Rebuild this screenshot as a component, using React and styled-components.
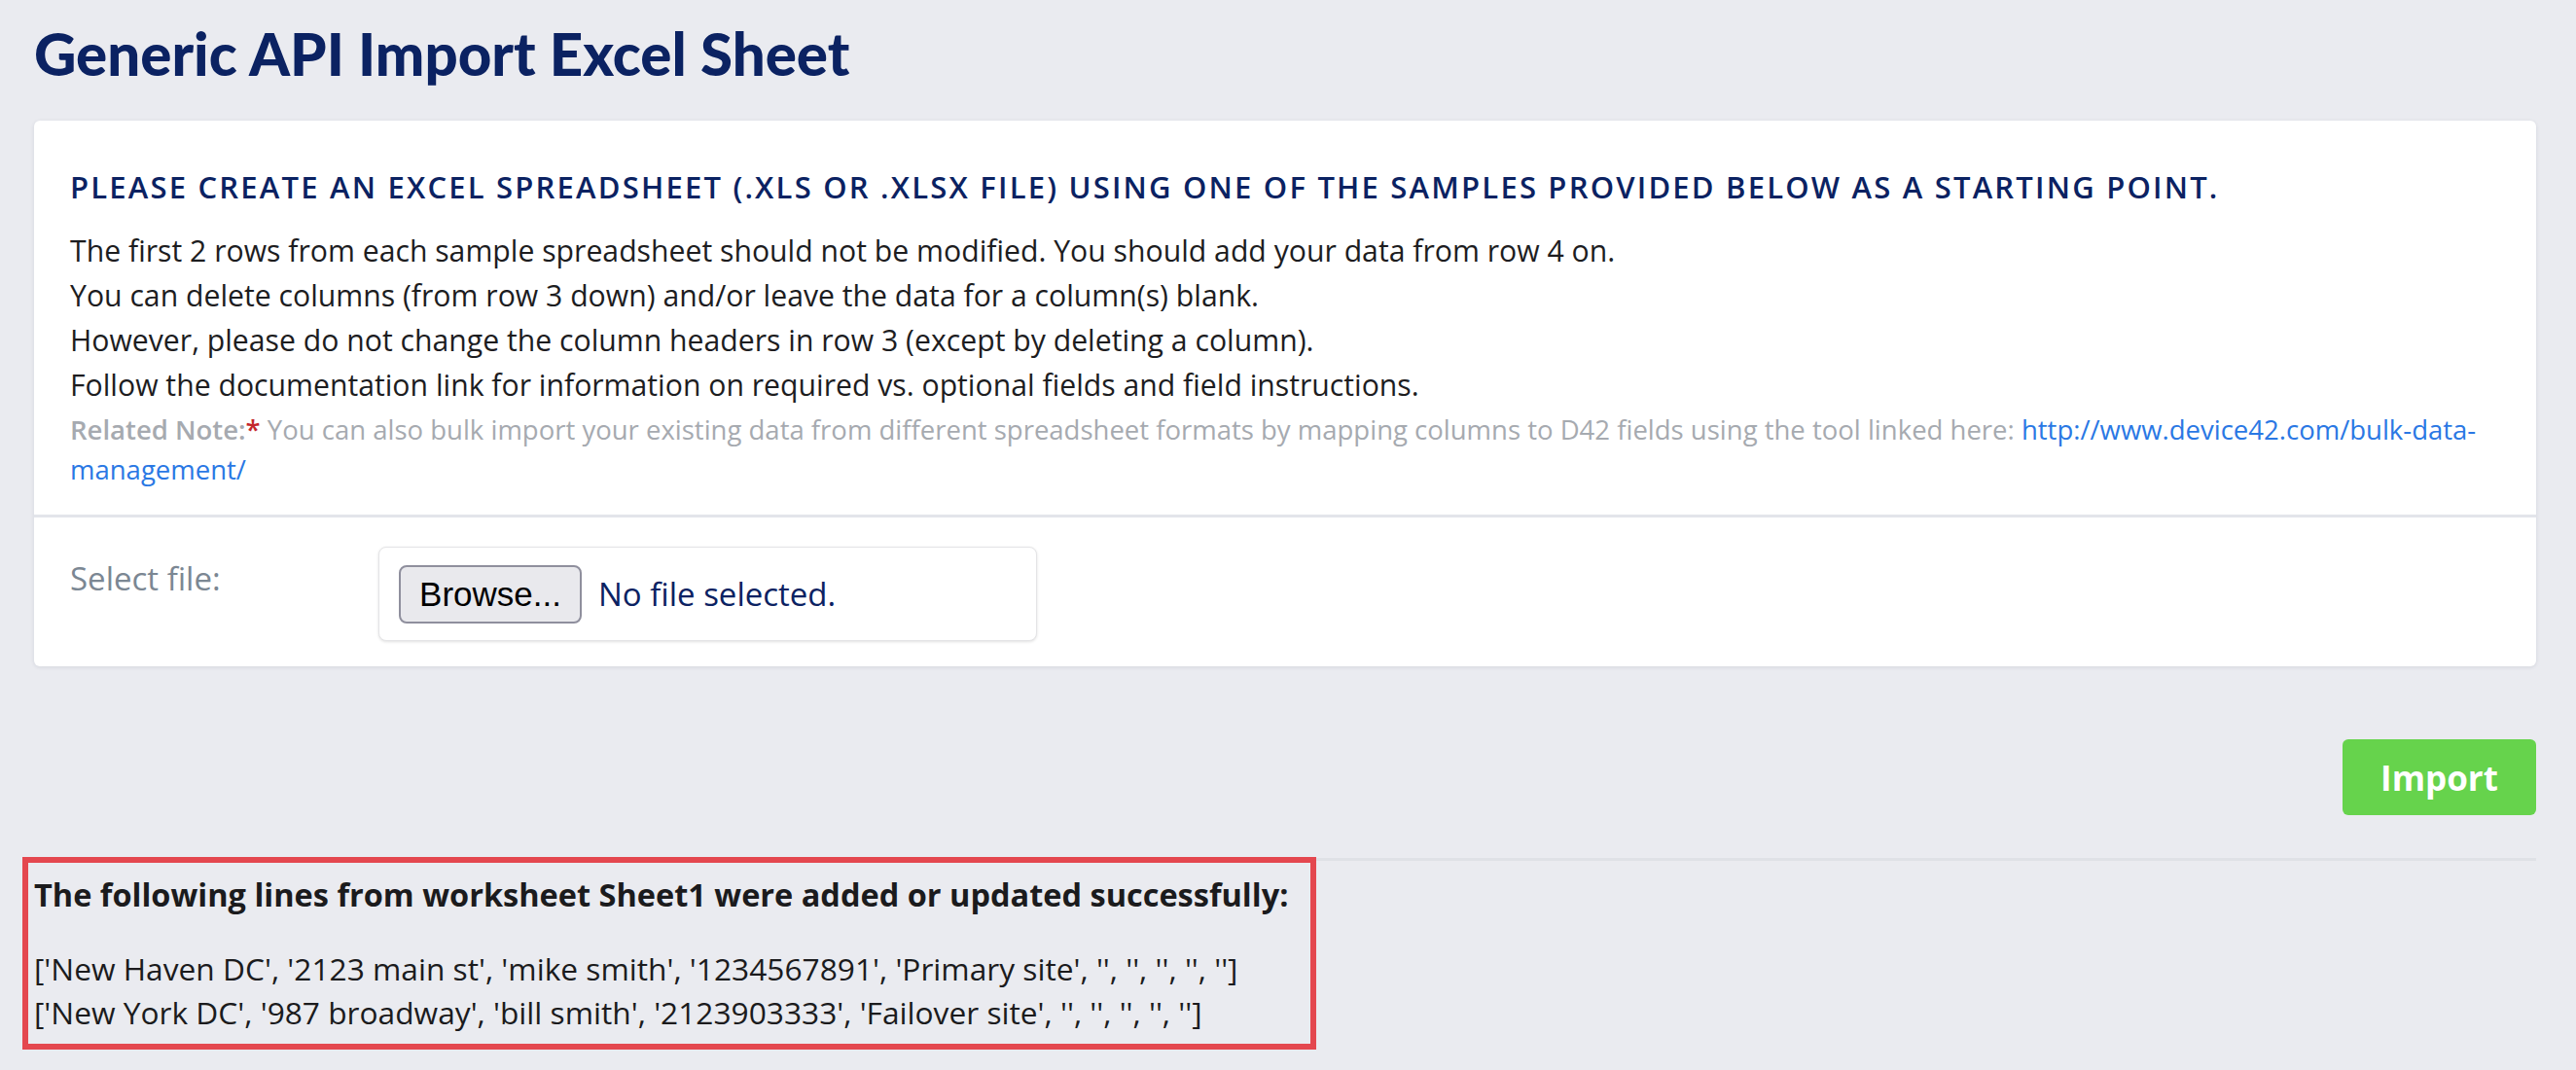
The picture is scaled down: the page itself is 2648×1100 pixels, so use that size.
import React from "react";
import styled, { createGlobalStyle } from "styled-components";

const GlobalStyle = createGlobalStyle`
  html, body {
    margin: 0;
    padding: 0;
    background: #eaebf0;
  }
  body {
    font-family: "Open Sans", "Liberation Sans", sans-serif;
    color: #1d1d1f;
  }
  * { box-sizing: border-box; }
`;

const Page = styled.div`
  padding: 19px 41px 40px 35px;
`;

const Title = styled.h1`
  margin: 0;
  font-family: "Lato", "Liberation Sans", sans-serif;
  font-weight: 900;
  font-size: 60px;
  line-height: 72px;
  color: #0b2262;
`;

const Card = styled.section`
  margin-top: 33px;
  background: #ffffff;
  border-radius: 6px;
  box-shadow: 0 1px 4px rgba(20, 30, 60, 0.1);
`;

const Intro = styled.div`
  padding: 50px 37px 26px;
`;

const Heading = styled.h2`
  margin: 0;
  font-size: 31px;
  line-height: 36px;
  font-weight: 600;
  letter-spacing: 2.2px;
  text-transform: uppercase;
  color: #0b2262;
`;

const Instructions = styled.div`
  margin-top: 25px;
  font-size: 30.2px;
  line-height: 46px;
  color: #1d1d1f;
`;

const Line = styled.div``;

const Note = styled.p`
  margin: 2px 0 0;
  font-size: 27.5px;
  line-height: 41px;
  color: #a6aab0;
`;

const NoteLabel = styled.span`
  font-weight: 600;
`;

const Required = styled.span`
  color: #c4262c;
  font-weight: 600;
`;

const Link = styled.a`
  color: #2a78e4;
  text-decoration: none;
`;

const FileRow = styled.div`
  display: flex;
  align-items: flex-start;
  border-top: 3px solid #e3e5ea;
  padding: 30px 37px 26px;
`;

const FieldLabel = styled.label`
  width: 317px;
  flex: none;
  margin-top: 13px;
  font-size: 33px;
  line-height: 40px;
  color: #7b8793;
`;

const FileBox = styled.div`
  width: 677px;
  height: 97px;
  display: flex;
  align-items: center;
  gap: 17px;
  padding: 0 20px;
  background: #fff;
  border: 1px solid #e4e4e6;
  border-radius: 8px;
  box-shadow: 0 1px 3px rgba(0, 0, 0, 0.12);
`;

const BrowseButton = styled.button`
  width: 188px;
  height: 60px;
  padding: 0;
  background: #e9e9ed;
  border: 2px solid #8f8f9d;
  border-radius: 8px;
  font-family: "Liberation Sans", Arial, sans-serif;
  font-size: 35px;
  color: #000;
`;

const FileStatus = styled.span`
  font-size: 33px;
  line-height: 40px;
  color: #0b2262;
`;

const Actions = styled.div`
  display: flex;
  justify-content: flex-end;
  margin-top: 75px;
`;

const ImportButton = styled.button`
  width: 199px;
  height: 78px;
  border: none;
  border-radius: 6px;
  background: #66d34c;
  color: #fff;
  font-family: "Open Sans", sans-serif;
  font-weight: 700;
  font-size: 35px;
`;

const Rule = styled.hr`
  margin: 44px 0 0;
  height: 3px;
  border: none;
  background: #dfe1e6;
`;

const ResultBox = styled.div`
  width: fit-content;
  margin: -4px 0 0 -12px;
  border: 6px solid #e4474f;
  padding: 10px 23px 10px 6px;
`;

const ResultTitle = styled.div`
  font-size: 32.5px;
  line-height: 45px;
  font-weight: 700;
  color: #1b1b1d;
`;

const ResultList = styled.div`
  margin-top: 31px;
  font-size: 31.7px;
  line-height: 45px;
  color: #1b1b1d;
`;

const instructions = [
  "The first 2 rows from each sample spreadsheet should not be modified. You should add your data from row 4 on.",
  "You can delete columns (from row 3 down) and/or leave the data for a column(s) blank.",
  "However, please do not change the column headers in row 3 (except by deleting a column).",
  "Follow the documentation link for information on required vs. optional fields and field instructions.",
];

const results = [
  "['New Haven DC', '2123 main st', 'mike smith', '1234567891', 'Primary site', '', '', '', '', '']",
  "['New York DC', '987 broadway', 'bill smith', '2123903333', 'Failover site', '', '', '', '', '']",
];

export default function App() {
  return (
    <>
      <GlobalStyle />
      <Page>
        <Title>Generic API Import Excel Sheet</Title>
        <Card>
          <Intro>
            <Heading>
              Please create an Excel spreadsheet (.xls or .xlsx file) using one of the samples provided below as a starting point.
            </Heading>
            <Instructions>
              {instructions.map((t) => (
                <Line key={t}>{t}</Line>
              ))}
            </Instructions>
            <Note>
              <NoteLabel>Related Note:</NoteLabel>
              <Required>*</Required> You can also bulk import your existing data from different spreadsheet formats by mapping columns to D42 fields using the tool linked here:{" "}
              <Link href="#">
                http://www.device42.com/bulk-data-
                <br />
                management/
              </Link>
            </Note>
          </Intro>
          <FileRow>
            <FieldLabel>Select file:</FieldLabel>
            <FileBox>
              <BrowseButton type="button">Browse...</BrowseButton>
              <FileStatus>No file selected.</FileStatus>
            </FileBox>
          </FileRow>
        </Card>
        <Actions>
          <ImportButton type="button">Import</ImportButton>
        </Actions>
        <Rule />
        <ResultBox>
          <ResultTitle>The following lines from worksheet Sheet1 were added or updated successfully:</ResultTitle>
          <ResultList>
            {results.map((r) => (
              <div key={r}>{r}</div>
            ))}
          </ResultList>
        </ResultBox>
      </Page>
    </>
  );
}
